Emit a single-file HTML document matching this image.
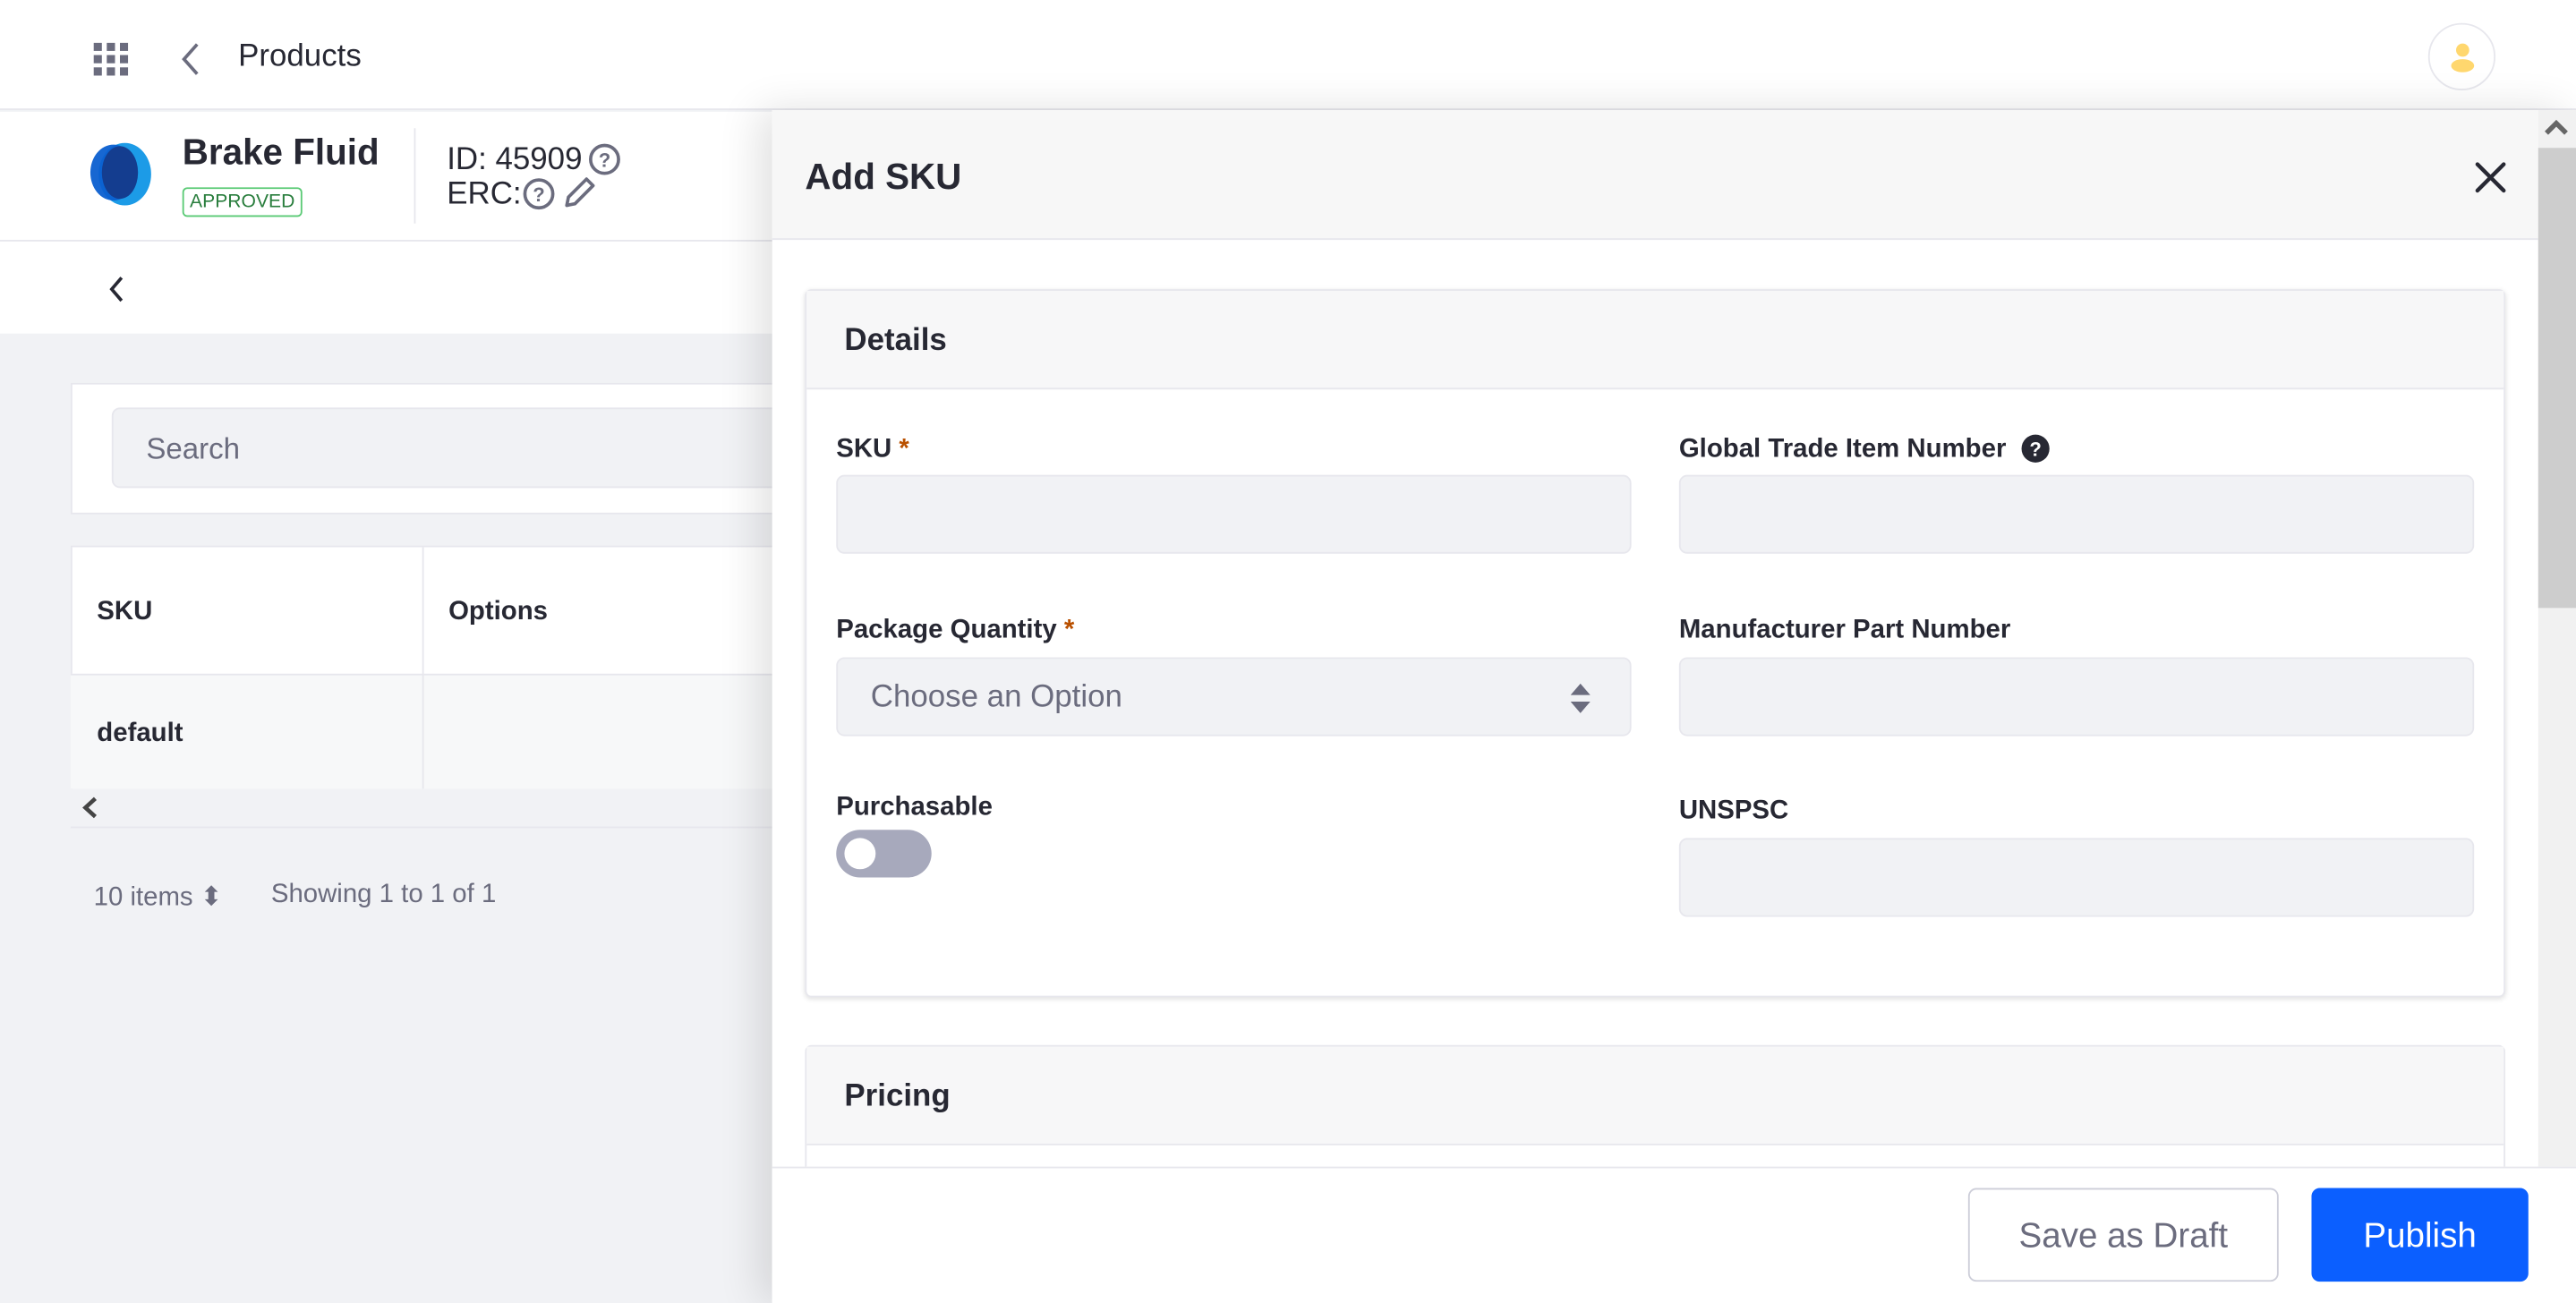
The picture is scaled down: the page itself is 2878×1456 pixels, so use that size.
<!DOCTYPE html>
<html><head><meta charset="utf-8"><style>
*{box-sizing:border-box;margin:0;padding:0}
html,body{width:2878px;height:1456px;overflow:hidden;background:#fff}
#w{position:absolute;left:0;top:0;width:1568px;height:793px;transform:scale(1.83546,1.8361);transform-origin:0 0;font-family:"Liberation Sans",sans-serif;color:#272833;background:#f1f2f5}
.a{position:absolute}
.lbl{position:absolute;font-size:16px;font-weight:bold;color:#272833}
.req{color:#b95000}
.inp{position:absolute;height:48px;width:484px;background:#f1f2f5;border:1px solid #e7e7ed;border-radius:5px}
</style></head><body><div id="w">
<div class="a" style="left:0;top:0;width:1568px;height:67px;background:#fff;border-bottom:1px solid #e7e7ed"></div>
<svg class="a" style="left:57px;top:26px" width="21" height="20" viewBox="0 0 21 20" fill="#6b6c7e"><rect x="0" y="0" width="5" height="5"/><rect x="8" y="0" width="5" height="5"/><rect x="16" y="0" width="5" height="5"/><rect x="0" y="7.5" width="5" height="5"/><rect x="8" y="7.5" width="5" height="5"/><rect x="16" y="7.5" width="5" height="5"/><rect x="0" y="15" width="5" height="5"/><rect x="8" y="15" width="5" height="5"/><rect x="16" y="15" width="5" height="5"/></svg>
<svg class="a" style="left:109px;top:26px" width="14" height="20" viewBox="0 0 14 20"><path d="M11 1 L3 10 L11 19" stroke="#6b6c7e" stroke-width="2" fill="none"/></svg>
<div class="a" style="left:145px;top:24px;font-size:19px;color:#272833">Products</div>
<div class="a" style="left:1478px;top:14px;width:41px;height:41px;border-radius:50%;border:1px solid #e7e7ed;background:#fff"></div>
<svg class="a" style="left:1489px;top:25px" width="20" height="20" viewBox="0 0 20 20" fill="#ffd76e"><circle cx="10" cy="5.5" r="4"/><ellipse cx="10" cy="15" rx="7" ry="4"/></svg>
<div class="a" style="left:0;top:68px;width:1568px;height:79px;background:#fff;border-bottom:1px solid #e7e7ed"></div>
<svg class="a" style="left:52px;top:86px" width="42" height="40" viewBox="0 0 42 40"><ellipse cx="24" cy="20" rx="16" ry="19" fill="#1c9be7"/><ellipse cx="17" cy="19" rx="14" ry="17" fill="#0b5fd0" opacity="0.95"/><ellipse cx="21" cy="19" rx="11" ry="16" fill="#143d8f"/></svg>
<div class="a" style="left:111px;top:80px;font-size:22px;font-weight:bold">Brake Fluid</div>
<div class="a" style="left:111px;top:114px;width:73px;height:18px;border:1px solid #5aca75;border-radius:3px;color:#287d3c;font-size:11.5px;line-height:16px;text-align:center">APPROVED</div>
<div class="a" style="left:252px;top:78px;width:1px;height:58px;background:#e7e7ed"></div>
<div class="a" style="left:272px;top:87px;font-size:19px;line-height:21px">ID: 45909<br>ERC:</div>
<svg class="a" style="left:358px;top:87px" width="20" height="20" viewBox="0 0 20 20"><circle cx="10" cy="10" r="8.5" stroke="#6b6c7e" stroke-width="2" fill="none"/><text x="10" y="14.5" font-size="12" font-weight="bold" text-anchor="middle" fill="#6b6c7e" font-family="Liberation Sans">?</text></svg>
<svg class="a" style="left:318px;top:108px" width="20" height="20" viewBox="0 0 20 20"><circle cx="10" cy="10" r="8.5" stroke="#6b6c7e" stroke-width="2" fill="none"/><text x="10" y="14.5" font-size="12" font-weight="bold" text-anchor="middle" fill="#6b6c7e" font-family="Liberation Sans">?</text></svg>
<svg class="a" style="left:342px;top:106px" width="22" height="22" viewBox="0 0 22 22"><path d="M3 19 L4 14 L15 3 L19 7 L8 18 Z" stroke="#6b6c7e" stroke-width="2" fill="none" stroke-linejoin="round"/></svg>
<div class="a" style="left:0;top:147px;width:1568px;height:56px;background:#fff"></div>
<svg class="a" style="left:65px;top:168px" width="12" height="16" viewBox="0 0 12 16"><path d="M9 1 L3 8 L9 15" stroke="#272833" stroke-width="2" fill="none"/></svg>
<div class="a" style="left:43px;top:233px;width:460px;height:80px;background:#fff;border:1px solid #e7e7ed"></div>
<div class="a" style="left:68px;top:248px;width:440px;height:49px;background:#f1f2f5;border:1px solid #e7e7ed;border-radius:5px"></div>
<div class="a" style="left:89px;top:263px;font-size:18px;color:#6b6c7e">Search</div>
<div class="a" style="left:43px;top:332px;width:460px;height:172px;background:#fff;border:1px solid #e7e7ed"></div>
<div class="a" style="left:43px;top:410px;width:460px;height:70px;background:#f7f8f9;border-top:1px solid #e7e7ed"></div>
<div class="a" style="left:43px;top:480px;width:460px;height:24px;background:#f1f2f5;border-bottom:1px solid #e7e7ed"></div>
<div class="a" style="left:257px;top:333px;width:1px;height:147px;background:#e7e7ed"></div>
<div class="a" style="left:59px;top:364px;font-size:16px;font-weight:bold">SKU</div>
<div class="a" style="left:273px;top:364px;font-size:16px;font-weight:bold">Options</div>
<div class="a" style="left:59px;top:438px;font-size:16px;font-weight:bold">default</div>
<svg class="a" style="left:50px;top:485px" width="10" height="13" viewBox="0 0 10 13"><path d="M8 1 L2 6.5 L8 12" stroke="#444" stroke-width="2.5" fill="none"/></svg>
<div class="a" style="left:57px;top:536px;font-size:16px;color:#6b6c7e">10 items &#x2B0D;</div>
<div class="a" style="left:165px;top:536px;font-size:16px;color:#6b6c7e">Showing 1 to 1 of 1</div>
<div class="a" style="left:470px;top:67px;width:1098px;height:726px;background:#fff;box-shadow:-8px 0 24px rgba(0,0,0,0.12)"></div>
<div class="a" style="left:470px;top:67px;width:1075px;height:79px;background:#f7f7f7;border-bottom:1px solid #e7e7ed"></div>
<div class="a" style="left:490px;top:95px;font-size:22px;font-weight:bold">Add SKU</div>
<svg class="a" style="left:1505px;top:97px" width="22" height="22" viewBox="0 0 22 22"><path d="M3 3 L19 19 M19 3 L3 19" stroke="#272833" stroke-width="2.4" stroke-linecap="round"/></svg>
<div class="a" style="left:1545px;top:67px;width:23px;height:643px;background:#f1f1f1"></div>
<div class="a" style="left:1545px;top:90px;width:23px;height:280px;background:#cdcdcd"></div>
<svg class="a" style="left:1549px;top:72px" width="14" height="10" viewBox="0 0 14 10"><path d="M1 9 L7 3 L13 9" stroke="#666" stroke-width="3" fill="none"/></svg>
<div class="a" style="left:490px;top:176px;width:1035px;height:431px;background:#fff;border:1px solid #e7e7ed;border-radius:4px;box-shadow:0 1px 3px rgba(0,0,0,0.12)"></div>
<div class="a" style="left:491px;top:177px;width:1033px;height:60px;background:#f7f7f8;border-bottom:1px solid #e7e7ed"></div>
<div class="a" style="left:514px;top:197px;font-size:19px;font-weight:bold">Details</div>
<div class="lbl" style="left:509px;top:265px">SKU <span class="req">*</span></div>
<div class="inp" style="left:509px;top:289px"></div>
<div class="lbl" style="left:1022px;top:265px">Global Trade Item Number</div>
<svg class="a" style="left:1230px;top:264px" width="18" height="18" viewBox="0 0 18 18"><circle cx="9" cy="9" r="8.5" fill="#272833"/><text x="9" y="13.5" font-size="12" font-weight="bold" text-anchor="middle" fill="#fff" font-family="Liberation Sans">?</text></svg>
<div class="inp" style="left:1022px;top:289px"></div>
<div class="lbl" style="left:509px;top:375px">Package Quantity <span class="req">*</span></div>
<div class="inp" style="left:509px;top:400px"></div>
<div class="a" style="left:530px;top:414px;font-size:19px;color:#6b6c7e">Choose an Option</div>
<svg class="a" style="left:955px;top:416px" width="14" height="18" viewBox="0 0 14 18" fill="#6b6c7e"><path d="M7 0 L13 7 L1 7 Z M1 11 L13 11 L7 18 Z"/></svg>
<div class="lbl" style="left:1022px;top:375px">Manufacturer Part Number</div>
<div class="inp" style="left:1022px;top:400px"></div>
<div class="lbl" style="left:509px;top:483px">Purchasable</div>
<div class="a" style="left:509px;top:505px;width:58px;height:29px;border-radius:15px;background:#a7a9bc"></div>
<div class="a" style="left:514px;top:510px;width:19px;height:19px;border-radius:50%;background:#fff"></div>
<div class="lbl" style="left:1022px;top:485px">UNSPSC</div>
<div class="inp" style="left:1022px;top:510px"></div>
<div class="a" style="left:490px;top:636px;width:1035px;height:80px;background:#fff;border:1px solid #e7e7ed;border-radius:4px"></div>
<div class="a" style="left:491px;top:637px;width:1033px;height:60px;background:#f7f7f8;border-bottom:1px solid #e7e7ed"></div>
<div class="a" style="left:514px;top:657px;font-size:19px;font-weight:bold">Pricing</div>
<div class="a" style="left:470px;top:710px;width:1098px;height:83px;background:#fff;border-top:1px solid #e7e7ed"></div>
<div class="a" style="left:1198px;top:723px;width:189px;height:57px;border:1px solid #cdced9;border-radius:5px;background:#fff;font-size:21px;color:#6b6c7e;text-align:center;line-height:58px">Save as Draft</div>
<div class="a" style="left:1407px;top:723px;width:132px;height:57px;border-radius:5px;background:#0b5fff;font-size:21px;color:#fff;text-align:center;line-height:60px">Publish</div>
</div></body></html>
